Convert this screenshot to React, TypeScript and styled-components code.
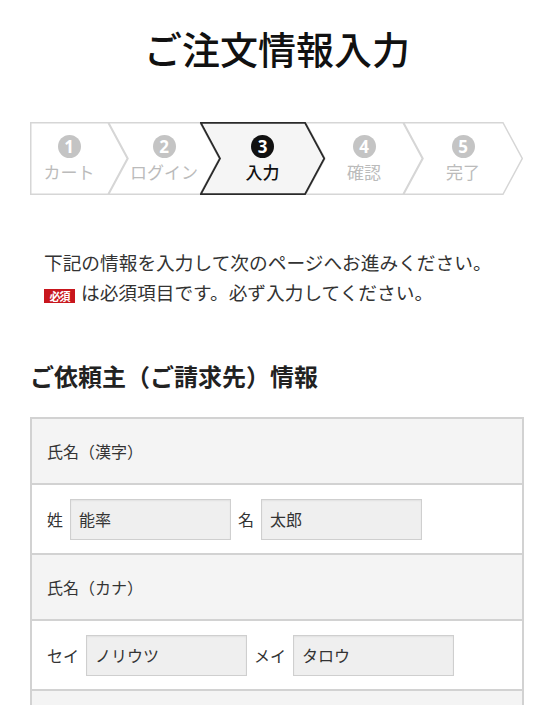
import React from 'react'
import styled, { createGlobalStyle } from 'styled-components'

const GlobalStyle = createGlobalStyle`
  body {
    margin: 0;
    background: #fff;
    color: #333;
    font-family: 'Noto Sans CJK JP', 'Noto Sans', sans-serif;
  }
  * {
    box-sizing: border-box;
  }
`

const Page = styled.div`
  padding: 0 30px 40px;
`

const Title = styled.h1`
  margin: 23px 0 0;
  font-size: 38px;
  line-height: 50px;
  font-weight: 500;
  color: #111;
  text-align: center;
`

const StepList = styled.ol`
  display: flex;
  height: 73px;
  margin: 49px 0 0;
  padding: 0;
  list-style: none;
`

const STEP_H = 73
const TIP = 20

const StepItem = styled.li<{ $w: number; $first: boolean; $active: boolean }>`
  position: relative;
  z-index: ${(p) => (p.$active ? 2 : 1)};
  flex: 0 0 ${(p) => p.$w}px;
  margin-left: ${(p) => (p.$first ? 0 : -TIP)}px;
  padding: 0 ${TIP}px 0 ${(p) => (p.$first ? 0 : TIP)}px;
  display: flex;
  flex-direction: column;
  align-items: center;
  justify-content: center;
  gap: 3px;
  color: ${(p) => (p.$active ? '#111' : '#bbb')};
`

const StepShape = styled.svg`
  position: absolute;
  inset: 0;
  z-index: -1;
`

const StepNum = styled.span<{ $active: boolean }>`
  width: 23px;
  height: 23px;
  border-radius: 50%;
  background: ${(p) => (p.$active ? '#111' : '#c4c4c4')};
  color: #fff;
  font-family: 'Noto Sans', sans-serif;
  font-size: 17px;
  font-weight: 700;
  line-height: 23px;
  text-align: center;
`

const StepLabel = styled.span<{ $active: boolean }>`
  font-size: 17px;
  line-height: 21px;
  font-weight: ${(p) => (p.$active ? 500 : 400)};
`

const Intro = styled.div`
  margin-top: 52px;
  padding-left: 14px;
  font-size: 18.7px;
  line-height: 30px;
  color: #333;
`

const Required = styled.span`
  display: inline-block;
  width: 31px;
  height: 14px;
  margin-right: 6px;
  background: #c8161d;
  color: #fff;
  font-size: 11px;
  font-weight: 700;
  line-height: 14px;
  letter-spacing: -1px;
  text-align: center;
  vertical-align: -1px;
`

const SectionTitle = styled.h2`
  margin: 53px 0 0;
  font-size: 24px;
  line-height: 32px;
  font-weight: 700;
  color: #222;
`

const FormTable = styled.div`
  margin-top: 25px;
  border: 2px solid #d2d2d2;
`

const HeadRow = styled.div`
  display: flex;
  align-items: center;
  height: 66px;
  padding: 0 15px;
  background: #f4f4f4;
  border-bottom: 2px solid #d2d2d2;
  font-size: 16px;
  color: #333;
`

const FieldRow = styled.div`
  display: flex;
  align-items: center;
  gap: 7px;
  height: 70px;
  padding: 0 15px;
  background: #fff;
  border-bottom: 2px solid #d2d2d2;
  font-size: 16px;
  color: #333;
`

const FieldLabel = styled.label`
  white-space: nowrap;
`

const TextInput = styled.input`
  width: 161px;
  height: 41px;
  padding: 0 8px;
  border: 1px solid #cfcfcf;
  background: #efefef;
  box-shadow: inset 0 1px 2px rgba(0, 0, 0, 0.06);
  font-family: inherit;
  font-size: 16px;
  color: #333;
  outline: none;
`

const steps = [
  { n: '1', label: 'カート', w: 98 },
  { n: '2', label: 'ログイン', w: 112 },
  { n: '3', label: '入力', w: 125 },
  { n: '4', label: '確認', w: 118 },
  { n: '5', label: '完了', w: 120 },
]

const ACTIVE = 2

function shapePath(w: number, first: boolean) {
  const h = STEP_H
  const s = 0.75
  const notch = first ? `L${s},${h - s}` : `L${s},${h - s} L${TIP},${h / 2}`
  return `M${s},${s} H${w - TIP} L${w - s},${h / 2} L${w - TIP},${h - s} ${notch} Z`
}

export default function App() {
  return (
    <Page>
      <GlobalStyle />
      <Title>ご注文情報入力</Title>

      <StepList>
        {steps.map((s, i) => {
          const active = i === ACTIVE
          return (
            <StepItem key={s.n} $w={s.w} $first={i === 0} $active={active}>
              <StepShape width={s.w} height={STEP_H} viewBox={`0 0 ${s.w} ${STEP_H}`}>
                <path
                  d={shapePath(s.w, i === 0)}
                  fill={active ? '#f5f5f5' : '#fff'}
                  stroke={active ? '#2a2a2a' : '#d6d6d6'}
                  strokeWidth={active ? 1.8 : 1.5}
                />
              </StepShape>
              <StepNum $active={active}>{s.n}</StepNum>
              <StepLabel $active={active}>{s.label}</StepLabel>
            </StepItem>
          )
        })}
      </StepList>

      <Intro>
        下記の情報を入力して次のページへお進みください。
        <br />
        <Required>必須</Required>
        は必須項目です。必ず入力してください。
      </Intro>

      <SectionTitle>ご依頼主（ご請求先）情報</SectionTitle>

      <FormTable>
        <HeadRow>氏名（漢字）</HeadRow>
        <FieldRow>
          <FieldLabel>姓</FieldLabel>
          <TextInput defaultValue="能率" />
          <FieldLabel>名</FieldLabel>
          <TextInput defaultValue="太郎" />
        </FieldRow>
        <HeadRow>氏名（カナ）</HeadRow>
        <FieldRow>
          <FieldLabel>セイ</FieldLabel>
          <TextInput defaultValue="ノリウツ" />
          <FieldLabel>メイ</FieldLabel>
          <TextInput defaultValue="タロウ" />
        </FieldRow>
        <HeadRow />
      </FormTable>
    </Page>
  )
}
